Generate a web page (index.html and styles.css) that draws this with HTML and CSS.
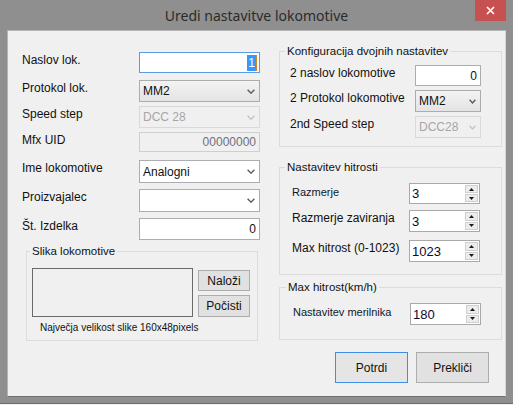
FILE: index.html
```html
<!DOCTYPE html>
<html lang="sl">
<head>
<meta charset="utf-8">
<title>Uredi nastavitve lokomotive</title>
<link rel="stylesheet" href="styles.css">
</head>
<body>
<div class="window">
  <div class="titlebar">
    <div class="title">Uredi nastavitve lokomotive</div>
    <div class="close"><svg width="9" height="9" viewBox="0 0 9 9"><path d="M1 1L8 8M8 1L1 8" stroke="#fff" stroke-width="1.7"/></svg></div>
  </div>
  <div class="client">
    <!-- levi stolpec -->
    <div class="col-left">
      <div class="row">
        <div class="lbl">Naslov lok.</div>
        <div class="ctl wide focus"><span class="sel">1</span><span class="caret"></span></div>
      </div>
      <div class="row gap7">
        <div class="lbl">Protokol lok.</div>
        <div class="ctl wide combo">MM2<svg class="chev" width="8" height="5" viewBox="0 0 8 5"><path d="M0.6 0.8L4 4.2L7.4 0.8"/></svg></div>
      </div>
      <div class="row">
        <div class="lbl">Speed step</div>
        <div class="ctl wide combo disabled">DCC 28<svg class="chev" width="8" height="5" viewBox="0 0 8 5"><path d="M0.6 0.8L4 4.2L7.4 0.8"/></svg></div>
      </div>
      <div class="row">
        <div class="lbl">Mfx UID</div>
        <div class="ctl wide readonly">00000000</div>
      </div>
      <div class="row gap8">
        <div class="lbl">Ime lokomotive</div>
        <div class="ctl wide edit">Analogni<svg class="chev" width="8" height="5" viewBox="0 0 8 5"><path d="M0.6 0.8L4 4.2L7.4 0.8"/></svg></div>
      </div>
      <div class="row gap6">
        <div class="lbl">Proizvajalec</div>
        <div class="ctl wide edit"><svg class="chev" width="8" height="5" viewBox="0 0 8 5"><path d="M0.6 0.8L4 4.2L7.4 0.8"/></svg></div>
      </div>
      <div class="row gap6">
        <div class="lbl">Št. Izdelka</div>
        <div class="ctl wide num tall">0</div>
      </div>

      <fieldset class="group g-pic">
        <legend>Slika lokomotive</legend>
        <div class="pic-row">
          <div class="pic"></div>
          <div class="pic-btns">
            <div class="btn">Naloži</div>
            <div class="btn tall">Počisti</div>
          </div>
        </div>
        <div class="hint">Največja velikost slike 160x48pixels</div>
      </fieldset>
    </div>

    <!-- desni stolpec -->
    <div class="col-right">
      <fieldset class="group g-dual">
        <legend>Konfiguracija dvojnih nastavitev</legend>
        <div class="row">
          <div class="lbl">2 naslov lokomotive</div>
          <div class="ctl small num">0</div>
        </div>
        <div class="row">
          <div class="lbl">2 Protokol lokomotive</div>
          <div class="ctl small combo">MM2<svg class="chev" width="7" height="5" viewBox="0 0 7 5"><path d="M0.6 0.8L3.5 4L6.4 0.8"/></svg></div>
        </div>
        <div class="row">
          <div class="lbl">2nd Speed step</div>
          <div class="ctl small combo disabled">DCC28<svg class="chev" width="7" height="5" viewBox="0 0 7 5"><path d="M0.6 0.8L3.5 4L6.4 0.8"/></svg></div>
        </div>
      </fieldset>

      <fieldset class="group g-speed">
        <legend>Nastavitev hitrosti</legend>
        <div class="row">
          <div class="lbl ct">Razmerje</div>
          <div class="spin"><span class="val">3</span><span class="btns"><span><svg width="5" height="3" viewBox="0 0 5 3"><path d="M0 3H5L2.5 0Z"/></svg></span><span><svg width="5" height="3" viewBox="0 0 5 3"><path d="M0 0H5L2.5 3Z"/></svg></span></span></div>
        </div>
        <div class="row gap6">
          <div class="lbl">Razmerje zaviranja</div>
          <div class="spin tall"><span class="val">3</span><span class="btns"><span><svg width="5" height="3" viewBox="0 0 5 3"><path d="M0 3H5L2.5 0Z"/></svg></span><span><svg width="5" height="3" viewBox="0 0 5 3"><path d="M0 0H5L2.5 3Z"/></svg></span></span></div>
        </div>
        <div class="row gap8">
          <div class="lbl">Max hitrost (0-1023)</div>
          <div class="spin tall"><span class="val">1023</span><span class="btns"><span><svg width="5" height="3" viewBox="0 0 5 3"><path d="M0 3H5L2.5 0Z"/></svg></span><span><svg width="5" height="3" viewBox="0 0 5 3"><path d="M0 0H5L2.5 3Z"/></svg></span></span></div>
        </div>
      </fieldset>

      <fieldset class="group g-max">
        <legend>Max hitrost(km/h)</legend>
        <div class="row">
          <div class="lbl ct">Nastavitev merilnika</div>
          <div class="spin tall"><span class="val">180</span><span class="btns"><span><svg width="5" height="3" viewBox="0 0 5 3"><path d="M0 3H5L2.5 0Z"/></svg></span><span><svg width="5" height="3" viewBox="0 0 5 3"><path d="M0 0H5L2.5 3Z"/></svg></span></span></div>
        </div>
      </fieldset>

      <div class="actions">
        <div class="btn btn-lg default">Potrdi</div>
        <div class="btn btn-lg">Prekliči</div>
      </div>
    </div>
  </div>
</div>
</body>
</html>
```

FILE: styles.css
```css
* {
	box-sizing:border-box;
}
body {
	margin:0;
	width:513px;
	height:405px;
	overflow:hidden;
	background:#f4f4f4;
	font-family:"Liberation Sans", Arial, sans-serif;
	font-size:12px;
	color:#111;
}

/* okvir okna */
.window {
	height:404px;
	background:#8f8f8f;
	border-bottom:1px solid #6c6c6c;
}
.titlebar {
	height:30px;
	display:grid;
	grid-template-columns:1fr auto 1fr;
}
.title {
	grid-column:2;
	font-family:"Noto Sans", sans-serif;
	font-size:14px;
	line-height:31px;
	color:#2b2b2b;
}
.close {
	grid-column:3;
	justify-self:end;
	width:31px;
	height:21px;
	margin-right:7px;
	background:#c75050;
	display:flex;
	align-items:center;
	justify-content:center;
}
.client {
	margin-left:7px;
	width:499px;
	height:367px;
	border:1px solid;
	border-color:#b4b4b4 #d6d6d6 #6f6f6f #b4b4b4;
	background:#f0f0f0;
	display:flex;
}
.col-left {
	width:271px;
	padding:21px 0 0 14px;
}
.col-right {
	width:223px;
	padding-top:13px;
}

/* vrstice */
.row {
	display:flex;
	margin-top:4px;
}
.col-left > .row:first-child, legend + .row {
	margin-top:0;
}
.row.gap6 { margin-top:6px; }
.row.gap7 { margin-top:7px; }
.row.gap8 { margin-top:8px; }
.lbl {
	width:117px;
	padding-top:1px;
	line-height:14px;
	white-space:nowrap;
}
.lbl.ct {
	font-size:11px;
	padding-top:2px;
	color:#101828;
}

/* kontrolniki */
.ctl {
	height:21px;
	border:1px solid #abadb3;
	background:#fff;
	display:flex;
	align-items:center;
	padding:0 3px;
	line-height:14px;
	white-space:nowrap;
}
.ctl.wide { width:121px; }
.ctl.small { width:66px; }
.ctl.num { justify-content:flex-end; }
.ctl.tall, .spin.tall, .btn.tall { height:22px; }
.chev {
	margin-left:auto;
	margin-right:1px;
}
.chev path {
	fill:none;
	stroke:#5c5c5c;
	stroke-width:1.4;
}
.combo {
	height:22px;
	background:linear-gradient(#f3f3f3, #e4e4e4);
	border-color:#acacac;
}
.edit {
	height:23px;
}
.disabled {
	background:#f0f0f0;
	border-color:#d9d9d9;
	color:#a6a6a6;
}
.disabled .chev path {
	stroke:#c4c4c4;
}
.readonly {
	height:20px;
	background:#f0f0f0;
	border-color:#cfcfcf;
	color:#6e6e7c;
	justify-content:flex-end;
}
.focus {
	border-color:#569de5;
	justify-content:flex-end;
	padding-right:2px;
}
.focus .sel {
	background:#3399ff;
	color:#fff;
	padding:0 1px;
	line-height:16px;
}
.focus .caret {
	width:1px;
	height:16px;
	background:#d9822b;
}

/* stevec */
.spin {
	width:71px;
	height:21px;
	border:1px solid #a9a9a9;
	background:#fff;
	display:flex;
	padding:1px 1px 1px 2px;
	font-size:13px;
}
.spin .val {
	flex:1;
	display:flex;
	align-items:center;
	color:#0a0a30;
}
.spin .btns {
	width:13px;
	display:flex;
	flex-direction:column;
	gap:1px;
}
.spin .btns span {
	flex:1;
	background:#ececec;
	border:1px solid #d0d0d0;
	display:flex;
	align-items:center;
	justify-content:center;
}
.spin svg path {
	fill:#1a1a1a;
}

/* skupine - legenda je zamaknjena glede na padding skupine */
.group {
	margin:0;
	padding:0;
	min-width:0;
	border:1px solid #dcdcdc;
}
.group legend {
	padding:0 2px;
	line-height:14px;
	font-size:11.5px;
}
.g-dual {
	padding:7px 0 8px 10px;
}
.g-dual legend { margin-left:-5px; }
.g-dual .lbl { width:125px; }
.g-speed {
	margin-top:13px;
	padding:9px 0 12px 12px;
}
.g-speed legend { margin-left:-7px; }
.g-max {
	margin-top:5px;
	padding:9px 0 14px 13px;
}
.g-max legend { margin-left:-7px; }
.g-pic {
	width:232px;
	margin:4px 0 0 4px;
	padding:10px 0 5px 5px;
}
.g-pic legend {
	margin-left:-2px;
}
.pic-row {
	display:flex;
}
.pic {
	width:161px;
	height:49px;
	border:1px solid #6a6a6a;
}
.pic-btns {
	margin-left:5px;
	padding-top:2px;
	display:flex;
	flex-direction:column;
	gap:4px;
}
.hint {
	margin:4px 0 0 8px;
	font-size:10px;
	line-height:14px;
}

/* gumbi */
.btn {
	width:52px;
	height:21px;
	background:#e1e1e1;
	border:1px solid #adadad;
	display:flex;
	align-items:center;
	justify-content:center;
}
.actions {
	display:flex;
	justify-content:flex-end;
	gap:8px;
	margin-top:12px;
	padding-right:13px;
}
.btn-lg {
	width:73px;
	height:31px;
}
.btn.default {
	border-color:#3c8fe4;
	background:#e5e5e5;
}
```
